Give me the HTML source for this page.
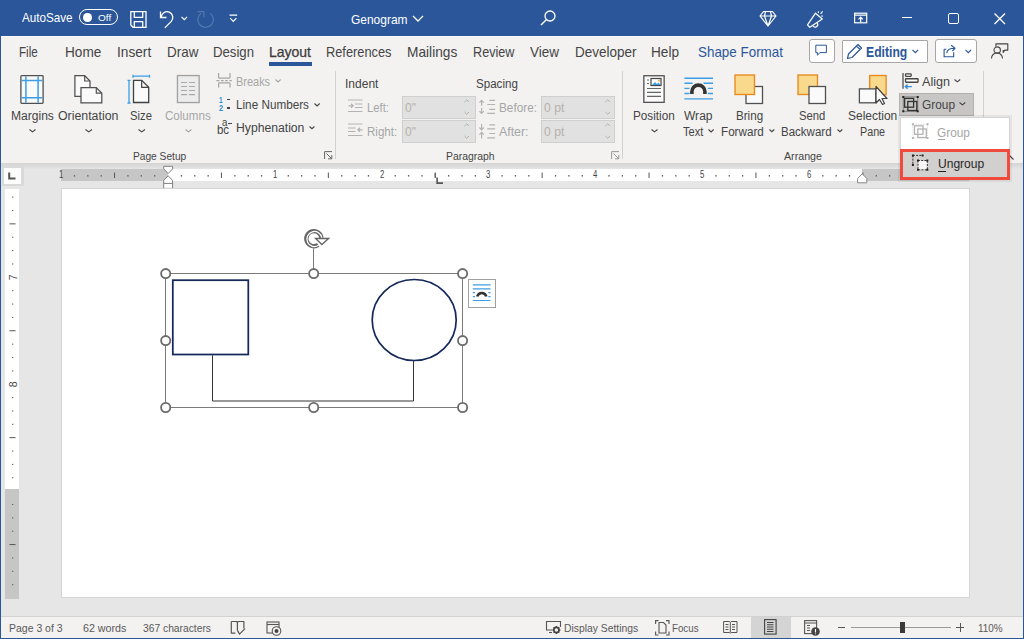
<!DOCTYPE html>
<html><head><meta charset="utf-8"><style>
html,body{margin:0;padding:0;}
body{width:1024px;height:639px;position:relative;overflow:hidden;background:#e6e6e6;font-family:"Liberation Sans",sans-serif;}
.t{position:absolute;white-space:nowrap;transform-origin:0 0;}
svg{overflow:visible}
</style></head><body>
<div style="position:absolute;left:0px;top:0px;width:1024px;height:36px;background:#2b579a"></div>
<div style="position:absolute;left:0px;top:36px;width:1024px;height:127px;background:#f3f2f1"></div>
<div style="position:absolute;left:0px;top:36px;width:1024px;height:1px;background:#fbfbfb"></div>
<div style="position:absolute;left:0px;top:163px;width:1024px;height:6px;background:linear-gradient(#d3d3d3,#e5e5e5)"></div>
<div style="position:absolute;left:0px;top:169px;width:1024px;height:447px;background:#e6e6e6"></div>
<div style="position:absolute;left:0px;top:616px;width:1024px;height:1px;background:#d2d2d2"></div>
<div style="position:absolute;left:0px;top:617px;width:1024px;height:22px;background:#f3f2f1"></div>
<div class="t" style="left:22.00px;top:11.76px;font-size:12.8px;line-height:12.8px;color:#ffffff;transform:scaleX(0.9098);">AutoSave</div>
<div style="position:absolute;left:79px;top:9px;width:39px;height:16px;border:1.3px solid #fff;border-radius:8px;box-sizing:border-box"></div>
<div style="position:absolute;left:83px;top:13.1px;width:8.599999999999994px;height:8.6px;background:#fff;border-radius:50%"></div>
<div class="t" style="left:98.20px;top:13.27px;font-size:9.6px;line-height:9.6px;color:#ffffff;transform:scaleX(1.0453);">Off</div>
<svg style="position:absolute;left:130px;top:11px;" width="17" height="17" viewBox="0 0 17 17"><path d="M0.8 0.7H16V16.3H3L0.8 14Z M4.3 0.7V6.3H12.7V0.7 M4.3 16.3V10.6H12.7V16.3" fill="none" stroke="#fff" stroke-width="1.3"/></svg>
<svg style="position:absolute;left:158px;top:10px;" width="17" height="19" viewBox="0 0 17 19"><path d="M2.5 1.5V7.5H8.5" fill="none" stroke="#fff" stroke-width="1.3"/><path d="M3.2 7.5A5.8 5.8 0 1 1 13.1 11.6L6.8 17.9" fill="none" stroke="#fff" stroke-width="1.3"/></svg>
<svg style="position:absolute;left:181px;top:16px;" width="7" height="5" viewBox="0 0 7 5"><path d="M0.5 0.8L3.3 3.6L6.1 0.8" fill="none" stroke="#fff" stroke-width="1.2"/></svg>
<svg style="position:absolute;left:197px;top:10px;" width="19" height="19" viewBox="0 0 19 19"><path d="M13.07 3.21A7.8 7.8 0 1 1 4.13 3.21 M0.5 1.7H6.8V7.6" fill="none" stroke="#5176b0" stroke-width="1.3"/></svg>
<svg style="position:absolute;left:229px;top:14px;" width="9" height="9" viewBox="0 0 9 9"><path d="M0.5 1.2H8.2 M1.2 4.2L4.3 7.3L7.4 4.2" fill="none" stroke="#fff" stroke-width="1.2"/></svg>
<div class="t" style="left:351.00px;top:13.00px;font-size:13px;line-height:13px;color:#ffffff;transform:scaleX(0.9199);">Genogram</div>
<svg style="position:absolute;left:412px;top:15px;" width="12" height="7" viewBox="0 0 12 7"><path d="M1 1L6 6L11 1" fill="none" stroke="#fff" stroke-width="1.3"/></svg>
<svg style="position:absolute;left:540px;top:10px;" width="16" height="16" viewBox="0 0 16 16"><circle cx="10" cy="6" r="5" fill="none" stroke="#fff" stroke-width="1.3"/><path d="M6.5 9.5L1 15" stroke="#fff" stroke-width="1.4"/></svg>
<svg style="position:absolute;left:759px;top:10px;" width="18" height="17" viewBox="0 0 18 17"><path d="M1 6L4.5 1.5H13.5L17 6L9 16Z M1 6H17 M6.5 1.5L5.5 6L9 16L12.5 6L11.5 1.5" fill="none" stroke="#fff" stroke-width="1.2" stroke-linejoin="round"/></svg>
<svg style="position:absolute;left:806px;top:10px;" width="19" height="19" viewBox="0 0 19 19"><path d="M1.5 14.8L9.5 3.2L16.3 9L3.8 17.3Z" fill="none" stroke="#fff" stroke-width="1.2" stroke-linejoin="round"/><path d="M6.8 15.8A2.5 2.5 0 0 0 11.3 13" fill="none" stroke="#fff" stroke-width="1.2"/><path d="M12.4 1.3V2.9 M14.6 3.8L16.6 1.4 M15.4 5.9L16.9 6.3" stroke="#fff" stroke-width="1.1"/></svg>
<svg style="position:absolute;left:853px;top:12px;" width="15" height="12" viewBox="0 0 15 12"><rect x="1.6" y="1.2" width="12.1" height="9.6" fill="none" stroke="#fff" stroke-width="1.2"/><path d="M1.6 3.2H13.7 M7.65 10.5V5.2 M5.5 7.4L7.65 5.2L9.8 7.4" fill="none" stroke="#fff" stroke-width="1.2"/></svg>
<div style="position:absolute;left:902px;top:17px;width:10px;height:1px;background:#fff"></div>
<div style="position:absolute;left:948px;top:13px;width:11px;height:11px;border:1.2px solid #fff;border-radius:2px;box-sizing:border-box"></div>
<svg style="position:absolute;left:994px;top:13px;" width="12" height="12" viewBox="0 0 12 12"><path d="M0.5 0.5L11 11 M11 0.5L0.5 11" stroke="#fff" stroke-width="1.3"/></svg>
<div class="t" style="left:18.60px;top:44.80px;font-size:14.3px;line-height:14.3px;color:#444444;transform:scaleX(0.8115);">File</div>
<div class="t" style="left:64.50px;top:44.80px;font-size:14.3px;line-height:14.3px;color:#444444;transform:scaleX(0.9516);">Home</div>
<div class="t" style="left:116.80px;top:44.80px;font-size:14.3px;line-height:14.3px;color:#444444;transform:scaleX(0.9563);">Insert</div>
<div class="t" style="left:166.60px;top:44.80px;font-size:14.3px;line-height:14.3px;color:#444444;transform:scaleX(0.9410);">Draw</div>
<div class="t" style="left:213.00px;top:44.80px;font-size:14.3px;line-height:14.3px;color:#444444;transform:scaleX(0.9211);">Design</div>
<div class="t" style="left:269.00px;top:44.80px;font-size:14.3px;line-height:14.3px;color:#3a3a3a;transform:scaleX(0.9782);-webkit-text-stroke:0.25px #3a3a3a;">Layout</div>
<div style="position:absolute;left:268.8px;top:62.3px;width:43.0px;height:3.5px;background:#2b579a"></div>
<div class="t" style="left:326.00px;top:44.80px;font-size:14.3px;line-height:14.3px;color:#444444;transform:scaleX(0.8957);">References</div>
<div class="t" style="left:406.70px;top:44.80px;font-size:14.3px;line-height:14.3px;color:#444444;transform:scaleX(0.9589);">Mailings</div>
<div class="t" style="left:473.00px;top:44.80px;font-size:14.3px;line-height:14.3px;color:#444444;transform:scaleX(0.8851);">Review</div>
<div class="t" style="left:530.00px;top:44.80px;font-size:14.3px;line-height:14.3px;color:#444444;transform:scaleX(0.9434);">View</div>
<div class="t" style="left:574.50px;top:44.80px;font-size:14.3px;line-height:14.3px;color:#444444;transform:scaleX(0.9435);">Developer</div>
<div class="t" style="left:651.00px;top:44.80px;font-size:14.3px;line-height:14.3px;color:#444444;transform:scaleX(0.9520);">Help</div>
<div class="t" style="left:698.00px;top:44.80px;font-size:14.3px;line-height:14.3px;color:#2b579a;transform:scaleX(0.9380);">Shape Format</div>
<div style="position:absolute;left:809px;top:39px;width:26px;height:24px;border:1px solid #a6a6a6;border-radius:3px;box-sizing:border-box;background:#ffffff"></div>
<svg style="position:absolute;left:815px;top:44px;" width="13" height="13" viewBox="0 0 13 13"><path d="M0.8 1.2H11.4V8.6H5L2.4 11.2V8.6H0.8Z" fill="none" stroke="#2b579a" stroke-width="1" stroke-linejoin="round"/></svg>
<div style="position:absolute;left:842px;top:40px;width:86px;height:23px;border:1px solid #a6a6a6;border-radius:1px;box-sizing:border-box;background:#ffffff"></div>
<svg style="position:absolute;left:846px;top:43px;" width="17" height="17" viewBox="0 0 17 17"><path d="M1.5 15.5L2.5 11L12 1.5L15.5 5L6 14.5Z M10.5 3L14 6.5" fill="none" stroke="#2b579a" stroke-width="1.2" stroke-linejoin="round"/></svg>
<div class="t" style="left:866.00px;top:44.57px;font-size:14.8px;line-height:14.8px;color:#2b579a;font-weight:bold;transform:scaleX(0.8236);">Editing</div>
<svg style="position:absolute;left:912px;top:49px;" width="7" height="5" viewBox="0 0 7 5"><path d="M0.5 0.8L3.3 3.6L6.1 0.8" fill="none" stroke="#2b579a" stroke-width="1.2"/></svg>
<div style="position:absolute;left:935px;top:39px;width:42px;height:24px;border:1px solid #a6a6a6;border-radius:3px;box-sizing:border-box;background:#ffffff"></div>
<svg style="position:absolute;left:942px;top:44px;" width="15" height="15" viewBox="0 0 15 15"><path d="M2.1 5.2V12.7H11.7V8.3 M2.1 5.2H4.3 M4.7 9.1C5 6 7 4.2 13 4.3 M9.1 1.2L13 4.3L10.4 7" fill="none" stroke="#2b579a" stroke-width="1.1" stroke-linejoin="round"/></svg>
<svg style="position:absolute;left:965px;top:49px;" width="7" height="5" viewBox="0 0 7 5"><path d="M0.5 0.8L3.3 3.6L6.1 0.8" fill="none" stroke="#2b579a" stroke-width="1.2"/></svg>
<svg style="position:absolute;left:990px;top:42px;" width="19" height="18" viewBox="0 0 19 18"><path d="M5.9 4.6V1.9H17.8V8.1H14.8L13.2 10.5V8.1" fill="none" stroke="#444" stroke-width="1.1" stroke-linejoin="round"/><circle cx="7.2" cy="8.1" r="3.2" fill="#f3f2f1" stroke="#444" stroke-width="1.1"/><path d="M1.5 16.4A5.5 5.5 0 0 1 12.5 16.4" fill="none" stroke="#444" stroke-width="1.1"/></svg>
<svg style="position:absolute;left:20px;top:74px;" width="25" height="30" viewBox="0 0 25 30"><rect x="0.9" y="1.7" width="22.2" height="27.7" rx="0.8" fill="#fafafa" stroke="#505050" stroke-width="1.3"/><path d="M5.9 2.3V28.8 M18.1 2.3V28.8 M1.5 6.4H22.5 M1.5 23.7H22.5" stroke="#3c9ee5" stroke-width="1.5"/></svg>
<div class="t" style="left:10.60px;top:109.59px;font-size:12.3px;line-height:12.3px;color:#444444;transform:scaleX(0.9806);">Margins</div>
<svg style="position:absolute;left:29px;top:129px;" width="7" height="4" viewBox="0 0 7 4"><path d="M0.5 0.5L3.50 2.90L6.50 0.5" fill="none" stroke="#444444" stroke-width="1.1"/></svg>
<svg style="position:absolute;left:73px;top:74px;" width="32" height="31" viewBox="0 0 32 31"><path d="M1.9 1.7H11.7L17 7V22.3H1.9Z" fill="#fafafa" stroke="#505050" stroke-width="1.25"/><path d="M11.7 1.7V7H17" fill="none" stroke="#505050" stroke-width="1.2"/><path d="M8 13.5H23.3L28.8 19.2V28.8H8Z" fill="#fafafa" stroke="#505050" stroke-width="1.25"/><path d="M23.3 13.5V19.2H28.8" fill="none" stroke="#505050" stroke-width="1.2"/></svg>
<div class="t" style="left:57.60px;top:109.59px;font-size:12.3px;line-height:12.3px;color:#444444;transform:scaleX(1.0039);">Orientation</div>
<svg style="position:absolute;left:84.5px;top:129px;" width="7.5" height="4" viewBox="0 0 7.5 4"><path d="M0.5 0.5L3.75 2.90L7.00 0.5" fill="none" stroke="#444444" stroke-width="1.1"/></svg>
<svg style="position:absolute;left:127px;top:74px;" width="24" height="31" viewBox="0 0 24 31"><path d="M6.5 6.3H14.7L21.7 13.3V28.5H6.5Z" fill="#fafafa" stroke="#404040" stroke-width="1.3"/><path d="M14.7 6.3V13.3H21.7" fill="none" stroke="#404040" stroke-width="1.2"/><path d="M6 2.2H22.5 M6 0.7V3.7 M22.5 0.7V3.7 M2 6.3V29 M0.5 6.3H3.5 M0.5 29H3.5" stroke="#3c9ee5" stroke-width="1.3"/></svg>
<div class="t" style="left:130.30px;top:109.59px;font-size:12.3px;line-height:12.3px;color:#444444;transform:scaleX(0.9152);">Size</div>
<svg style="position:absolute;left:138px;top:129px;" width="7.5" height="4" viewBox="0 0 7.5 4"><path d="M0.5 0.5L3.75 2.90L7.00 0.5" fill="none" stroke="#444444" stroke-width="1.1"/></svg>
<svg style="position:absolute;left:176px;top:74px;" width="24" height="30" viewBox="0 0 24 30"><rect x="1.45" y="1.55" width="21.7" height="27" fill="#ececec" stroke="#a0a0a0" stroke-width="1.3"/><path d="M5 8.5H11 M12.9 8.5H19 M5 12.5H11 M12.9 12.5H19 M5 16.5H11 M12.9 16.5H19 M5 20.6H11 M12.9 20.6H19" stroke="#aaaaaa" stroke-width="1.2"/></svg>
<div class="t" style="left:164.80px;top:109.59px;font-size:12.3px;line-height:12.3px;color:#a6a6a6;transform:scaleX(0.9416);">Columns</div>
<svg style="position:absolute;left:184.6px;top:129px;" width="6.900000000000006" height="4" viewBox="0 0 6.900000000000006 4"><path d="M0.5 0.5L3.45 2.90L6.40 0.5" fill="none" stroke="#a6a6a6" stroke-width="1.1"/></svg>
<svg style="position:absolute;left:216px;top:73px;" width="16" height="15" viewBox="0 0 16 15"><path d="M2.6 5.2V0 M14 5.2V0 M2.6 5.2H14 M0.4 7.6H3.4 M5 7.6H7.6 M9.2 7.6H11.8 M13.4 7.6H15.8 M2.6 14.5V9.9 M14 14.5V9.9 M2.6 9.9H14" fill="none" stroke="#a6a6a6" stroke-width="1.2"/></svg>
<div class="t" style="left:236.30px;top:75.59px;font-size:12.3px;line-height:12.3px;color:#a6a6a6;transform:scaleX(0.8907);">Breaks</div>
<svg style="position:absolute;left:274.6px;top:79.3px;" width="6.199999999999989" height="4" viewBox="0 0 6.199999999999989 4"><path d="M0.5 0.5L3.10 2.90L5.70 0.5" fill="none" stroke="#a6a6a6" stroke-width="1.1"/></svg>
<div class="t" style="left:219.40px;top:95.95px;font-size:8.8px;line-height:8.8px;color:#2d8fd6;font-weight:bold;transform:scaleX(0.7355);">1</div>
<div class="t" style="left:219.10px;top:104.15px;font-size:8.8px;line-height:8.8px;color:#2d8fd6;font-weight:bold;transform:scaleX(0.8377);">2</div>
<div style="position:absolute;left:226.8px;top:98.8px;width:2.799999999999983px;height:1.5px;background:#444"></div>
<div style="position:absolute;left:226.8px;top:107.1px;width:2.799999999999983px;height:1.5px;background:#444"></div>
<div class="t" style="left:236.00px;top:99.39px;font-size:12.3px;line-height:12.3px;color:#444444;transform:scaleX(0.9534);">Line Numbers</div>
<svg style="position:absolute;left:313.5px;top:102.8px;" width="6.199999999999989" height="4" viewBox="0 0 6.199999999999989 4"><path d="M0.5 0.5L3.10 2.90L5.70 0.5" fill="none" stroke="#444444" stroke-width="1.1"/></svg>
<div class="t" style="left:222.40px;top:117.01px;font-size:10.5px;line-height:10.5px;color:#444444;transform:scaleX(0.9247);">a</div>
<div style="position:absolute;left:228px;top:122.6px;width:3.6999999999999886px;height:1.2000000000000028px;background:#444"></div>
<div class="t" style="left:216.90px;top:124.02px;font-size:12.5px;line-height:12.5px;color:#444444;transform:scaleX(0.9165);">bc</div>
<div class="t" style="left:236.00px;top:122.39px;font-size:12.3px;line-height:12.3px;color:#444444;transform:scaleX(0.9903);">Hyphenation</div>
<svg style="position:absolute;left:308.8px;top:126px;" width="5.899999999999977" height="4" viewBox="0 0 5.899999999999977 4"><path d="M0.5 0.5L2.95 2.75L5.40 0.5" fill="none" stroke="#444444" stroke-width="1.1"/></svg>
<div class="t" style="left:133.00px;top:150.61px;font-size:10.5px;line-height:10.5px;color:#444444;transform:scaleX(0.9694);">Page Setup</div>
<svg style="position:absolute;left:324px;top:151px;" width="9" height="9" viewBox="0 0 9 9"><path d="M0.6 8V0.6H8 M2.5 2.5L7.5 7.5 M4 7.8H7.8V4" fill="none" stroke="#666" stroke-width="1"/></svg>
<div style="position:absolute;left:335px;top:71px;width:1px;height:88px;background:#d1d1d1"></div>
<div class="t" style="left:344.60px;top:77.89px;font-size:12.3px;line-height:12.3px;color:#444444;transform:scaleX(0.9767);">Indent</div>
<div class="t" style="left:476.30px;top:77.89px;font-size:12.3px;line-height:12.3px;color:#444444;transform:scaleX(0.9426);">Spacing</div>
<svg style="position:absolute;left:348px;top:99px;" width="15" height="14" viewBox="0 0 15 14"><path d="M0 1H14.5 M7 5H14.5 M7 8.5H14.5 M0 12.5H14.5 M0.5 6.8H5 M3 4.8L5.2 6.8L3 8.8" fill="none" stroke="#b3b3b3" stroke-width="1.2"/></svg>
<div class="t" style="left:367.30px;top:102.09px;font-size:12.3px;line-height:12.3px;color:#a6a6a6;transform:scaleX(0.9151);">Left:</div>
<div style="position:absolute;left:402px;top:96px;width:74px;height:23px;background:#e1e1e1;border:1px solid #cfcfcf;box-sizing:border-box"></div>
<div class="t" style="left:405.00px;top:101.59px;font-size:12.3px;line-height:12.3px;color:#b8b0a8;transform:scaleX(0.9815);">0"</div>
<svg style="position:absolute;left:464px;top:99px;" width="6" height="17" viewBox="0 0 6 17"><path d="M0.5 3L2.8 0.8L5 3 M0.5 13L2.8 15.2L5 13" fill="none" stroke="#b3b3b3" stroke-width="1"/></svg>
<svg style="position:absolute;left:348px;top:123px;" width="15" height="15" viewBox="0 0 15 15"><path d="M0 1H14.5 M0 5H7.5 M0 8.5H7.5 M0 12.5H14.5 M14.5 6.8H10 M12 4.8L9.8 6.8L12 8.8" fill="none" stroke="#b3b3b3" stroke-width="1.2"/></svg>
<div class="t" style="left:367.30px;top:126.19px;font-size:12.3px;line-height:12.3px;color:#a6a6a6;transform:scaleX(0.9368);">Right:</div>
<div style="position:absolute;left:402px;top:120px;width:74px;height:23px;background:#e1e1e1;border:1px solid #cfcfcf;box-sizing:border-box"></div>
<div class="t" style="left:405.00px;top:125.89px;font-size:12.3px;line-height:12.3px;color:#b8b0a8;transform:scaleX(0.9815);">0"</div>
<svg style="position:absolute;left:464px;top:123px;" width="6" height="17" viewBox="0 0 6 17"><path d="M0.5 3L2.8 0.8L5 3 M0.5 13L2.8 15.2L5 13" fill="none" stroke="#b3b3b3" stroke-width="1"/></svg>
<svg style="position:absolute;left:479px;top:99px;" width="17" height="16" viewBox="0 0 17 16"><path d="M0.4 3.6L2.6 1.3L4.8 3.6 M2.6 1.5V6.7 M2.6 8.9V14.5 M0.4 12.2L2.6 14.5L4.8 12.2 M10.3 1.3H16.1 M8.2 5.5H16.1 M10.3 10.3H16.1 M8.2 14.4H16.1" fill="none" stroke="#b3b3b3" stroke-width="1.2"/></svg>
<div class="t" style="left:499.00px;top:102.09px;font-size:12.3px;line-height:12.3px;color:#a6a6a6;transform:scaleX(0.9582);">Before:</div>
<div style="position:absolute;left:541px;top:96px;width:74px;height:23px;background:#e1e1e1;border:1px solid #cfcfcf;box-sizing:border-box"></div>
<div class="t" style="left:544.40px;top:101.59px;font-size:12.3px;line-height:12.3px;color:#b8b0a8;transform:scaleX(0.9895);">0 pt</div>
<svg style="position:absolute;left:605px;top:99px;" width="6" height="17" viewBox="0 0 6 17"><path d="M0.5 3L2.8 0.8L5 3 M0.5 13L2.8 15.2L5 13" fill="none" stroke="#b3b3b3" stroke-width="1"/></svg>
<svg style="position:absolute;left:479px;top:123px;" width="17" height="16" viewBox="0 0 17 16"><path d="M2.6 1.1V6.7 M0.4 4.5L2.6 6.8L4.8 4.5 M0.4 11.7L2.6 9.4L4.8 11.7 M2.6 9.6V15.5 M10.3 1.8H16.1 M8.2 5.8H16.1 M10.3 10.5H16.1 M8.2 14.8H16.1" fill="none" stroke="#b3b3b3" stroke-width="1.2"/></svg>
<div class="t" style="left:499.00px;top:126.19px;font-size:12.3px;line-height:12.3px;color:#a6a6a6;transform:scaleX(1.0036);">After:</div>
<div style="position:absolute;left:541px;top:120px;width:74px;height:23px;background:#e1e1e1;border:1px solid #cfcfcf;box-sizing:border-box"></div>
<div class="t" style="left:544.40px;top:125.89px;font-size:12.3px;line-height:12.3px;color:#b8b0a8;transform:scaleX(0.9895);">0 pt</div>
<svg style="position:absolute;left:605px;top:123px;" width="6" height="17" viewBox="0 0 6 17"><path d="M0.5 3L2.8 0.8L5 3 M0.5 13L2.8 15.2L5 13" fill="none" stroke="#b3b3b3" stroke-width="1"/></svg>
<div class="t" style="left:446.40px;top:150.71px;font-size:10.5px;line-height:10.5px;color:#444444;transform:scaleX(0.9911);">Paragraph</div>
<svg style="position:absolute;left:611px;top:151px;" width="9" height="9" viewBox="0 0 9 9"><path d="M0.6 8V0.6H8 M2.5 2.5L7.5 7.5 M4 7.8H7.8V4" fill="none" stroke="#999" stroke-width="1"/></svg>
<div style="position:absolute;left:622px;top:71px;width:1px;height:88px;background:#d1d1d1"></div>
<svg style="position:absolute;left:642px;top:74px;" width="24" height="30" viewBox="0 0 24 30"><rect x="1.85" y="1.75" width="20.3" height="26.6" fill="#fafafa" stroke="#505050" stroke-width="1.3"/><rect x="9" y="4.5" width="10" height="7" fill="#fff" stroke="#444" stroke-width="1.2"/><path d="M10 11L13 8L15 10L16.5 8.5L18.5 11Z" fill="#3c9ee5"/><circle cx="17" cy="6.5" r="1" fill="#f2a33a"/><path d="M5 6H7 M5 9.5H7 M5 14.5H19 M5 18.3H19 M5 22.3H19" stroke="#666" stroke-width="1.2"/></svg>
<div class="t" style="left:633.30px;top:109.59px;font-size:12.3px;line-height:12.3px;color:#444444;transform:scaleX(0.9529);">Position</div>
<svg style="position:absolute;left:651px;top:129px;" width="7" height="4" viewBox="0 0 7 4"><path d="M0.5 0.5L3.50 2.90L6.50 0.5" fill="none" stroke="#444444" stroke-width="1.1"/></svg>
<svg style="position:absolute;left:684px;top:77px;" width="29" height="23" viewBox="0 0 29 23"><path d="M0.4 1.3H29 M0.4 6.3H8.7 M19.5 6.3H29 M0.4 11.4H5.5 M23.9 11.4H29 M0.4 16.5H5.5 M23.9 16.5H29 M0.4 21.9H29" stroke="#3c9ee5" stroke-width="1.4"/><path d="M7.9 17.1V14.6A6.5 6.5 0 0 1 20.9 14.6V17.1" fill="none" stroke="#333" stroke-width="3.6"/></svg>
<div class="t" style="left:684.30px;top:109.59px;font-size:12.3px;line-height:12.3px;color:#444444;transform:scaleX(0.9772);">Wrap</div>
<div class="t" style="left:682.70px;top:125.59px;font-size:12.3px;line-height:12.3px;color:#444444;transform:scaleX(0.8999);">Text</div>
<svg style="position:absolute;left:708px;top:129px;" width="6.2000000000000455" height="4" viewBox="0 0 6.2000000000000455 4"><path d="M0.5 0.5L3.10 2.90L5.70 0.5" fill="none" stroke="#444444" stroke-width="1.1"/></svg>
<svg style="position:absolute;left:734px;top:74px;" width="30" height="31" viewBox="0 0 30 31"><rect x="12" y="12.5" width="16.5" height="17" fill="#fafafa" stroke="#505050" stroke-width="1.3"/><rect x="1" y="1" width="19.5" height="19.5" fill="#f9d98b" stroke="#e8891c" stroke-width="1.35"/></svg>
<div class="t" style="left:735.50px;top:109.59px;font-size:12.3px;line-height:12.3px;color:#444444;transform:scaleX(0.9437);">Bring</div>
<div class="t" style="left:721.40px;top:125.59px;font-size:12.3px;line-height:12.3px;color:#444444;transform:scaleX(0.9487);">Forward</div>
<svg style="position:absolute;left:769.2px;top:129px;" width="5.7999999999999545" height="4" viewBox="0 0 5.7999999999999545 4"><path d="M0.5 0.5L2.90 2.70L5.30 0.5" fill="none" stroke="#444444" stroke-width="1.1"/></svg>
<svg style="position:absolute;left:797px;top:74px;" width="31" height="31" viewBox="0 0 31 31"><rect x="1" y="1" width="19.5" height="19.5" fill="#f9d98b" stroke="#e8891c" stroke-width="1.35"/><rect x="12" y="12.5" width="16.5" height="17" fill="#fafafa" stroke="#505050" stroke-width="1.3"/></svg>
<div class="t" style="left:799.00px;top:109.59px;font-size:12.3px;line-height:12.3px;color:#444444;transform:scaleX(0.9155);">Send</div>
<div class="t" style="left:781.00px;top:125.59px;font-size:12.3px;line-height:12.3px;color:#444444;transform:scaleX(0.9369);">Backward</div>
<svg style="position:absolute;left:836.8px;top:129px;" width="5.800000000000068" height="4" viewBox="0 0 5.800000000000068 4"><path d="M0.5 0.5L2.90 2.70L5.30 0.5" fill="none" stroke="#444444" stroke-width="1.1"/></svg>
<svg style="position:absolute;left:857px;top:74px;" width="33" height="32" viewBox="0 0 33 32"><rect x="12.7" y="1.5" width="16.4" height="19.3" fill="#f9d98b" stroke="#e8891c" stroke-width="1.35"/><rect x="2.4" y="14.9" width="16.5" height="13.9" fill="#fafafa" stroke="#505050" stroke-width="1.3"/><path d="M19 12.5V29L22.5 25.5L25.5 30.5L27.5 29.5L25 24.5H30Z" fill="#fff" stroke="#404040" stroke-width="1.2" stroke-linejoin="round"/></svg>
<div class="t" style="left:847.50px;top:109.59px;font-size:12.3px;line-height:12.3px;color:#444444;transform:scaleX(0.9743);">Selection</div>
<div class="t" style="left:859.70px;top:125.59px;font-size:12.3px;line-height:12.3px;color:#444444;transform:scaleX(0.8737);">Pane</div>
<svg style="position:absolute;left:901px;top:72px;" width="19" height="18" viewBox="0 0 19 18"><path d="M2 1.1V16.8" stroke="#777" stroke-width="1.7"/><rect x="4.55" y="1.8" width="5.6" height="2.5" rx="0.5" fill="#fff" stroke="#444" stroke-width="1.3"/><rect x="4.55" y="6.75" width="12.5" height="3.5" rx="0.5" fill="#fff" stroke="#444" stroke-width="1.3"/><path d="M4.6 14.6H10.8 M6.6 12.5L4.4 14.6L6.6 16.7" fill="none" stroke="#2d8fd6" stroke-width="1.4"/></svg>
<div class="t" style="left:922.00px;top:76.19px;font-size:12.3px;line-height:12.3px;color:#444444;transform:scaleX(1.0237);">Align</div>
<svg style="position:absolute;left:954px;top:79px;" width="6.7000000000000455" height="4" viewBox="0 0 6.7000000000000455 4"><path d="M0.5 0.5L3.35 2.90L6.20 0.5" fill="none" stroke="#444444" stroke-width="1.1"/></svg>
<div style="position:absolute;left:899px;top:93px;width:75px;height:23px;background:#c8c6c4;border:1px solid #b3b0ad;box-sizing:border-box"></div>
<svg style="position:absolute;left:902px;top:95px;" width="18" height="18" viewBox="0 0 18 18"><path d="M1.3 1.9H15.7V16.3H1.3Z" fill="none" stroke="#555" stroke-width="0.6"/><rect x="2.6" y="3.4" width="9" height="8.8" fill="none" stroke="#333" stroke-width="1.3"/><rect x="5.8" y="6.5" width="9" height="9" fill="none" stroke="#333" stroke-width="1.3"/><path d="M0.3 0.9h2v2h-2z M14.7 0.9h2v2h-2z M0.3 15.3h2v2h-2z M14.7 15.3h2v2h-2z" fill="#222"/></svg>
<div class="t" style="left:922.00px;top:99.09px;font-size:12.3px;line-height:12.3px;color:#444444;transform:scaleX(0.9653);">Group</div>
<svg style="position:absolute;left:959px;top:102.3px;" width="6.7999999999999545" height="4" viewBox="0 0 6.7999999999999545 4"><path d="M0.5 0.5L3.40 2.90L6.30 0.5" fill="none" stroke="#444444" stroke-width="1.1"/></svg>
<div class="t" style="left:784.20px;top:150.71px;font-size:10.5px;line-height:10.5px;color:#444444;transform:scaleX(1.0172);">Arrange</div>
<div style="position:absolute;left:983px;top:71px;width:1px;height:88px;background:#d1d1d1"></div>
<svg style="position:absolute;left:1002px;top:154px;" width="13" height="7" viewBox="0 0 13 7"><path d="M1 5.5L6.5 0.5L11.5 5.5" fill="none" stroke="#444" stroke-width="1.1"/></svg>
<div style="position:absolute;left:2px;top:164.5px;width:22px;height:21.5px;background:#d9d9d9"></div>
<div style="position:absolute;left:4px;top:168px;width:17px;height:16px;background:#fcfcfc"></div>
<svg style="position:absolute;left:8px;top:172px;" width="8" height="8" viewBox="0 0 8 8"><path d="M1.2 0.5V6.5H7.5" fill="none" stroke="#555" stroke-width="2"/></svg>
<div style="position:absolute;left:60.5px;top:169px;width:908.5px;height:11.5px;background:#c6c6c6"></div>
<div style="position:absolute;left:167.5px;top:169px;width:694.5px;height:11.699999999999989px;background:#ffffff"></div>
<svg style="position:absolute;left:0px;top:0px;pointer-events:none" width="1024" height="200" viewBox="0 0 1024 200"><rect x="73.86" y="175" width="1.3" height="1.6" fill="#666"/><rect x="87.22" y="175" width="1.3" height="1.6" fill="#666"/><rect x="100.59" y="175" width="1.3" height="1.6" fill="#666"/><path d="M114.55 172.5V178" stroke="#555" stroke-width="1"/><rect x="127.31" y="175" width="1.3" height="1.6" fill="#666"/><rect x="140.68" y="175" width="1.3" height="1.6" fill="#666"/><rect x="154.04" y="175" width="1.3" height="1.6" fill="#666"/><rect x="180.76" y="175" width="1.3" height="1.6" fill="#666"/><rect x="194.12" y="175" width="1.3" height="1.6" fill="#666"/><rect x="207.49" y="175" width="1.3" height="1.6" fill="#666"/><path d="M221.45 172.5V178" stroke="#555" stroke-width="1"/><rect x="234.21" y="175" width="1.3" height="1.6" fill="#666"/><rect x="247.58" y="175" width="1.3" height="1.6" fill="#666"/><rect x="260.94" y="175" width="1.3" height="1.6" fill="#666"/><rect x="287.66" y="175" width="1.3" height="1.6" fill="#666"/><rect x="301.02" y="175" width="1.3" height="1.6" fill="#666"/><rect x="314.39" y="175" width="1.3" height="1.6" fill="#666"/><path d="M328.35 172.5V178" stroke="#555" stroke-width="1"/><rect x="341.11" y="175" width="1.3" height="1.6" fill="#666"/><rect x="354.48" y="175" width="1.3" height="1.6" fill="#666"/><rect x="367.84" y="175" width="1.3" height="1.6" fill="#666"/><rect x="394.56" y="175" width="1.3" height="1.6" fill="#666"/><rect x="407.92" y="175" width="1.3" height="1.6" fill="#666"/><rect x="421.29" y="175" width="1.3" height="1.6" fill="#666"/><path d="M435.25 172.5V178" stroke="#555" stroke-width="1"/><rect x="448.01" y="175" width="1.3" height="1.6" fill="#666"/><rect x="461.38" y="175" width="1.3" height="1.6" fill="#666"/><rect x="474.74" y="175" width="1.3" height="1.6" fill="#666"/><rect x="501.46" y="175" width="1.3" height="1.6" fill="#666"/><rect x="514.82" y="175" width="1.3" height="1.6" fill="#666"/><rect x="528.19" y="175" width="1.3" height="1.6" fill="#666"/><path d="M542.15 172.5V178" stroke="#555" stroke-width="1"/><rect x="554.91" y="175" width="1.3" height="1.6" fill="#666"/><rect x="568.27" y="175" width="1.3" height="1.6" fill="#666"/><rect x="581.64" y="175" width="1.3" height="1.6" fill="#666"/><rect x="608.36" y="175" width="1.3" height="1.6" fill="#666"/><rect x="621.73" y="175" width="1.3" height="1.6" fill="#666"/><rect x="635.09" y="175" width="1.3" height="1.6" fill="#666"/><path d="M649.05 172.5V178" stroke="#555" stroke-width="1"/><rect x="661.81" y="175" width="1.3" height="1.6" fill="#666"/><rect x="675.18" y="175" width="1.3" height="1.6" fill="#666"/><rect x="688.54" y="175" width="1.3" height="1.6" fill="#666"/><rect x="715.26" y="175" width="1.3" height="1.6" fill="#666"/><rect x="728.62" y="175" width="1.3" height="1.6" fill="#666"/><rect x="741.99" y="175" width="1.3" height="1.6" fill="#666"/><path d="M755.95 172.5V178" stroke="#555" stroke-width="1"/><rect x="768.71" y="175" width="1.3" height="1.6" fill="#666"/><rect x="782.08" y="175" width="1.3" height="1.6" fill="#666"/><rect x="795.44" y="175" width="1.3" height="1.6" fill="#666"/><rect x="822.16" y="175" width="1.3" height="1.6" fill="#666"/><rect x="835.52" y="175" width="1.3" height="1.6" fill="#666"/><rect x="848.89" y="175" width="1.3" height="1.6" fill="#666"/><path d="M862.85 172.5V178" stroke="#555" stroke-width="1"/><rect x="875.61" y="175" width="1.3" height="1.6" fill="#666"/><rect x="888.98" y="175" width="1.3" height="1.6" fill="#666"/><rect x="902.34" y="175" width="1.3" height="1.6" fill="#666"/><rect x="929.06" y="175" width="1.3" height="1.6" fill="#666"/><rect x="942.43" y="175" width="1.3" height="1.6" fill="#666"/><rect x="955.79" y="175" width="1.3" height="1.6" fill="#666"/></svg>
<div class="t" style="left:58.80px;top:170.34px;font-size:10px;line-height:10px;color:#444;transform:scaleX(0.7731);">1</div>
<div class="t" style="left:272.60px;top:170.34px;font-size:10px;line-height:10px;color:#444;transform:scaleX(0.7731);">1</div>
<div class="t" style="left:379.50px;top:170.34px;font-size:10px;line-height:10px;color:#444;transform:scaleX(0.7731);">2</div>
<div class="t" style="left:486.40px;top:170.34px;font-size:10px;line-height:10px;color:#444;transform:scaleX(0.7731);">3</div>
<div class="t" style="left:593.30px;top:170.34px;font-size:10px;line-height:10px;color:#444;transform:scaleX(0.7731);">4</div>
<div class="t" style="left:700.20px;top:170.34px;font-size:10px;line-height:10px;color:#444;transform:scaleX(0.7731);">5</div>
<div class="t" style="left:807.10px;top:170.34px;font-size:10px;line-height:10px;color:#444;transform:scaleX(0.7731);">6</div>
<svg style="position:absolute;left:162px;top:165px;" width="12" height="25" viewBox="0 0 12 25"><path d="M1.7 1.3H10.6V3.9L6.15 8.5L1.7 3.9Z" fill="#fff" stroke="#808080" stroke-width="1" stroke-linejoin="round"/><path d="M6.15 10.9L10.6 15.3V23.4H1.7V15.3Z M1.7 18.4H10.6" fill="#fff" stroke="#808080" stroke-width="1" stroke-linejoin="round"/></svg>
<svg style="position:absolute;left:857px;top:173px;" width="11" height="11" viewBox="0 0 11 11"><path d="M5.2 0.8L9.8 5.5V9.8H0.6V5.5Z" fill="#fff" stroke="#888" stroke-width="1"/></svg>
<svg style="position:absolute;left:433px;top:173px;" width="11" height="11" viewBox="0 0 11 11"><path d="M2.2 0.2V4.5" fill="none" stroke="#555" stroke-width="1.1"/><path d="M4.1 4.5V10.1H10" fill="none" stroke="#555" stroke-width="1.6"/></svg>
<div style="position:absolute;left:5px;top:189px;width:14px;height:410px;background:#c6c6c6"></div>
<div style="position:absolute;left:5px;top:189px;width:14px;height:300px;background:#ffffff"></div>
<svg style="position:absolute;left:0px;top:0px;" width="30" height="639" viewBox="0 0 30 639"><rect x="12" y="196.62" width="1.3" height="1.1" fill="#666"/><rect x="12" y="209.99" width="1.3" height="1.1" fill="#666"/><path d="M9.5 223.85H15.5" stroke="#555" stroke-width="1"/><rect x="12" y="236.71" width="1.3" height="1.1" fill="#666"/><rect x="12" y="250.08" width="1.3" height="1.1" fill="#666"/><rect x="12" y="263.44" width="1.3" height="1.1" fill="#666"/><rect x="12" y="290.16" width="1.3" height="1.1" fill="#666"/><rect x="12" y="303.53" width="1.3" height="1.1" fill="#666"/><rect x="12" y="316.89" width="1.3" height="1.1" fill="#666"/><path d="M9.5 330.75H15.5" stroke="#555" stroke-width="1"/><rect x="12" y="343.61" width="1.3" height="1.1" fill="#666"/><rect x="12" y="356.98" width="1.3" height="1.1" fill="#666"/><rect x="12" y="370.34" width="1.3" height="1.1" fill="#666"/><rect x="12" y="397.06" width="1.3" height="1.1" fill="#666"/><rect x="12" y="410.43" width="1.3" height="1.1" fill="#666"/><rect x="12" y="423.79" width="1.3" height="1.1" fill="#666"/><path d="M9.5 437.65H15.5" stroke="#555" stroke-width="1"/><rect x="12" y="450.51" width="1.3" height="1.1" fill="#666"/><rect x="12" y="463.88" width="1.3" height="1.1" fill="#666"/><rect x="12" y="477.24" width="1.3" height="1.1" fill="#666"/><rect x="12" y="503.96" width="1.3" height="1.1" fill="#666"/><rect x="12" y="517.33" width="1.3" height="1.1" fill="#666"/><rect x="12" y="530.69" width="1.3" height="1.1" fill="#666"/><path d="M9.5 544.55H15.5" stroke="#555" stroke-width="1"/><rect x="12" y="557.41" width="1.3" height="1.1" fill="#666"/><rect x="12" y="570.78" width="1.3" height="1.1" fill="#666"/><rect x="12" y="584.14" width="1.3" height="1.1" fill="#666"/></svg>
<div class="t" style="left:7.5px;top:272.15px;font-size:10.5px;line-height:10.5px;color:#444;transform:rotate(-90deg);transform-origin:5px 5.25px;width:10px;text-align:center">7</div>
<div class="t" style="left:7.5px;top:379.1px;font-size:10.5px;line-height:10.5px;color:#444;transform:rotate(-90deg);transform-origin:5px 5.25px;width:10px;text-align:center">8</div>
<div style="position:absolute;left:61px;top:188px;width:909px;height:410px;background:#d4d4d4"></div>
<div style="position:absolute;left:62px;top:189px;width:907px;height:408px;background:#ffffff"></div>
<svg style="position:absolute;left:0px;top:0px;" width="1024" height="639" viewBox="0 0 1024 639"><path d="M165.5 273.5H462.5V407.5H165.5Z" fill="none" stroke="#7a7a7a" stroke-width="1"/><path d="M313.5 248.5V268.5" stroke="#7a7a7a" stroke-width="1"/><rect x="172.8" y="280.2" width="75.5" height="74.3" fill="#fff" stroke="#14285a" stroke-width="1.75"/><ellipse cx="414.2" cy="320" rx="42" ry="40.5" fill="#fff" stroke="#14285a" stroke-width="1.7"/><path d="M212.5 355.3V401H413.5V361" fill="none" stroke="#333" stroke-width="1"/><circle cx="165.7" cy="273.6" r="4.6" fill="#fff" stroke="#6b6b6b" stroke-width="1.8"/><circle cx="313.7" cy="273.6" r="4.6" fill="#fff" stroke="#6b6b6b" stroke-width="1.8"/><circle cx="462.6" cy="273.6" r="4.6" fill="#fff" stroke="#6b6b6b" stroke-width="1.8"/><circle cx="165.7" cy="340.6" r="4.6" fill="#fff" stroke="#6b6b6b" stroke-width="1.8"/><circle cx="462.6" cy="340.6" r="4.6" fill="#fff" stroke="#6b6b6b" stroke-width="1.8"/><circle cx="165.7" cy="407.5" r="4.6" fill="#fff" stroke="#6b6b6b" stroke-width="1.8"/><circle cx="313.7" cy="407.5" r="4.6" fill="#fff" stroke="#6b6b6b" stroke-width="1.8"/><circle cx="462.6" cy="407.5" r="4.6" fill="#fff" stroke="#6b6b6b" stroke-width="1.8"/><path d="M321.42 238.04A7.55 7.55 0 1 0 318.23 244.88" fill="none" stroke="#666" stroke-width="4.3"/><path d="M321.9 238.0A7.55 7.55 0 1 0 318.6 245.3" fill="none" stroke="#fff" stroke-width="1.3"/><path d="M315.6 238.5H328.6L321.9 244.6Z" fill="#fff" stroke="#666" stroke-width="1.4" stroke-linejoin="miter"/></svg>
<div style="position:absolute;left:468px;top:279px;width:28px;height:29px;background:#fff;border:1px solid #a0a0a0;box-sizing:border-box"></div>
<svg style="position:absolute;left:472px;top:284px;" width="20" height="18" viewBox="0 0 20 18"><path d="M0.8 0.9H18.5 M0.8 4.8H18.5 M0.8 8.7H3 M16.3 8.7H18.5 M0.8 12.6H3 M16.3 12.6H18.5 M0.8 16.5H18.5" stroke="#3c9ee5" stroke-width="1.2"/><path d="M5.3 12.6A4.6 4.6 0 0 1 14.3 12.6" fill="none" stroke="#333" stroke-width="2.6"/></svg>
<div style="position:absolute;left:898px;top:115px;width:114px;height:67px;background:rgba(0,0,0,0.06)"></div>
<div style="position:absolute;left:899.5px;top:116.5px;width:110.5px;height:63.5px;background:#fff;border:1px solid #d6d6d6;box-sizing:border-box"></div>
<svg style="position:absolute;left:911px;top:122px;" width="18" height="18" viewBox="0 0 18 18"><path d="M1.9 2.3H16.5V15.9H1.9Z" fill="none" stroke="#c8c8c8" stroke-width="0.6" stroke-dasharray="1.5 1"/><rect x="3.5" y="3.8" width="8.5" height="8.5" fill="none" stroke="#b3b3b3" stroke-width="1.3"/><rect x="6.8" y="7" width="8.5" height="8.5" fill="none" stroke="#b3b3b3" stroke-width="1.3"/><path d="M0.9 1.3h2v2h-2z M15.5 1.3h2v2h-2z M0.9 14.9h2v2h-2z M15.5 14.9h2v2h-2z" fill="#b3b3b3"/></svg>
<div class="t" style="left:937.30px;top:126.89px;font-size:12.3px;line-height:12.3px;color:#a6a6a6;transform:scaleX(0.9624);">Group</div>
<div style="position:absolute;left:937.5px;top:139px;width:7.5px;height:1px;background:#a6a6a6"></div>
<div style="position:absolute;left:900px;top:149px;width:110px;height:31px;background:#d2d0ce;border:3px solid #f04a3c;box-sizing:border-box"></div>
<svg style="position:absolute;left:911px;top:154px;" width="18" height="17" viewBox="0 0 18 17"><path d="M1.9 1.4H11.6 M1.9 1.4V11.1" fill="none" stroke="#333" stroke-width="1" stroke-dasharray="2 1.2"/><rect x="7" y="6.5" width="9.3" height="9.3" fill="#f7f7f7" stroke="#333" stroke-width="1" stroke-dasharray="2 1.2"/><path d="M0.9 0.4h2v2h-2z M10.6 0.4h2v2h-2z M0.9 10.1h2v2h-2z M6 5.5h2v2h-2z M15.3 5.5h2v2h-2z M6 14.8h2v2h-2z M15.3 14.8h2v2h-2z" fill="#222"/></svg>
<div class="t" style="left:937.70px;top:158.39px;font-size:12.3px;line-height:12.3px;color:#262626;transform:scaleX(0.9791);">Ungroup</div>
<div style="position:absolute;left:937.7px;top:170.5px;width:8.299999999999955px;height:1.0px;background:#262626"></div>
<div class="t" style="left:9.40px;top:622.69px;font-size:11px;line-height:11px;color:#595959;transform:scaleX(0.9526);">Page 3 of 3</div>
<div class="t" style="left:82.60px;top:622.69px;font-size:11px;line-height:11px;color:#595959;transform:scaleX(0.9723);">62 words</div>
<div class="t" style="left:143.00px;top:622.69px;font-size:11px;line-height:11px;color:#595959;transform:scaleX(0.9345);">367 characters</div>
<svg style="position:absolute;left:230px;top:620px;" width="16" height="16" viewBox="0 0 16 16"><path d="M1.3 1.5H6.5L7.4 2.4L8.3 1.5H13.9V8.6 M7.4 2.4V10.4 M1.3 1.5V13.1H5.4" fill="none" stroke="#555" stroke-width="1.2" stroke-linejoin="round"/><path d="M7.4 10.4L9.5 14.1L15 8.6" fill="none" stroke="#555" stroke-width="1.2"/></svg>
<svg style="position:absolute;left:266px;top:621px;" width="16" height="15" viewBox="0 0 16 15"><rect x="1" y="1" width="12" height="11" fill="none" stroke="#555" stroke-width="1.1"/><path d="M1 3.5H13" stroke="#555" stroke-width="1.1"/><circle cx="10.5" cy="10" r="4.3" fill="#f3f2f1" stroke="#555" stroke-width="1.1"/><circle cx="10.5" cy="10" r="2" fill="#444"/></svg>
<svg style="position:absolute;left:545px;top:620px;" width="17" height="16" viewBox="0 0 17 16"><path d="M7 10H1.5V1.5H15.5V7" fill="none" stroke="#555" stroke-width="1.1"/><path d="M4 12.5H7" stroke="#555" stroke-width="1.1"/><circle cx="11.4" cy="10" r="2.6" fill="none" stroke="#444" stroke-width="1.7"/><path d="M11.4 6V7.2 M11.4 12.8V14 M7.4 10H8.6 M14.2 10H15.4 M8.6 7.2L9.4 8 M13.4 12L14.2 12.8 M8.6 12.8L9.4 12 M13.4 8L14.2 7.2" stroke="#444" stroke-width="1.3"/></svg>
<div class="t" style="left:563.70px;top:622.69px;font-size:11px;line-height:11px;color:#595959;transform:scaleX(0.9395);">Display Settings</div>
<svg style="position:absolute;left:655px;top:620px;" width="15" height="16" viewBox="0 0 15 16"><path d="M0.6 4V0.6H3.5 M11 0.6H14V4 M0.6 11.5V15H3.5 M11 15H14V11.5" fill="none" stroke="#555" stroke-width="1.1"/><path d="M4 2.5H8.5L11 5V13H4Z" fill="none" stroke="#555" stroke-width="1.1"/></svg>
<div class="t" style="left:672.00px;top:622.69px;font-size:11px;line-height:11px;color:#595959;transform:scaleX(0.8847);">Focus</div>
<svg style="position:absolute;left:723px;top:620px;" width="15" height="14" viewBox="0 0 15 14"><path d="M0.6 1.5H6.5L7.3 2.3L8.1 1.5H14V12.5H8.1L7.3 13.3L6.5 12.5H0.6Z M7.3 2.3V12.5 M2.5 4.5H5.5 M2.5 7H5.5 M2.5 9.5H5.5 M9 4.5H12 M9 7H12 M9 9.5H12" fill="none" stroke="#555" stroke-width="1"/></svg>
<div style="position:absolute;left:751px;top:617px;width:40px;height:21px;background:#d4d4d4"></div>
<svg style="position:absolute;left:764px;top:619px;" width="13" height="16" viewBox="0 0 13 16"><rect x="0.6" y="0.6" width="11.5" height="14.5" fill="none" stroke="#444" stroke-width="1.1"/><path d="M3 3.5H9.5 M3 5.8H9.5 M3 8H9.5 M3 10.3H9.5 M3 12.5H9.5" stroke="#444" stroke-width="1.1"/></svg>
<svg style="position:absolute;left:804px;top:620px;" width="17" height="16" viewBox="0 0 17 16"><rect x="0.6" y="0.6" width="12" height="13" fill="none" stroke="#555" stroke-width="1.1"/><path d="M0.6 3H12.6 M3 5.5H6 M3 8H6 M3 10.5H6" stroke="#555" stroke-width="1"/><circle cx="11.5" cy="11.5" r="4.3" fill="#444"/><path d="M11.5 9V12.5 M11.5 13.5V14.3" stroke="#fff" stroke-width="1.1"/></svg>
<div style="position:absolute;left:837.6px;top:627px;width:7.899999999999977px;height:1px;background:#555"></div>
<div style="position:absolute;left:850.8px;top:626.8px;width:100.60000000000002px;height:1.5px;background:#9a9a9a"></div>
<div style="position:absolute;left:900.2px;top:621.8px;width:4.7999999999999545px;height:11.400000000000091px;background:#3a3a3a"></div>
<div style="position:absolute;left:956.4px;top:627px;width:8.100000000000023px;height:1px;background:#555"></div>
<div style="position:absolute;left:960px;top:623px;width:1px;height:9px;background:#555"></div>
<div class="t" style="left:978.30px;top:622.69px;font-size:11px;line-height:11px;color:#595959;transform:scaleX(0.9042);">110%</div>
<div style="position:absolute;left:0px;top:0px;width:1px;height:639px;background:#2b579a"></div>
<div style="position:absolute;left:1023px;top:0px;width:1px;height:639px;background:#2b579a"></div>
<div style="position:absolute;left:0px;top:638px;width:1024px;height:1px;background:#2b579a"></div>
</body></html>
